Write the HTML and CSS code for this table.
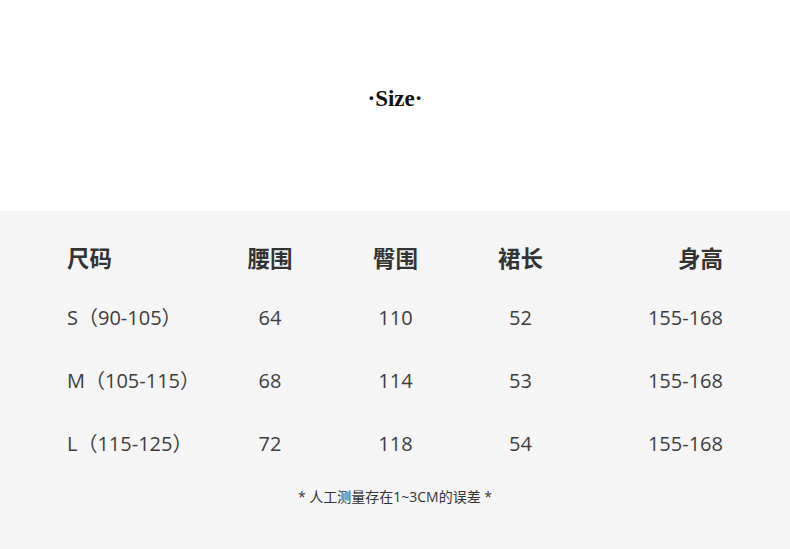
FILE: index.html
```html
<!DOCTYPE html>
<html lang="zh">
<head>
<meta charset="utf-8">
<link rel="stylesheet" href="styles.css">
</head>
<body>
<header class="top">
  <h1 class="title">·Size·</h1>
</header>
<section class="panel">
  <div class="table">
    <div class="cell head left">尺码</div>
    <div class="cell head">腰围</div>
    <div class="cell head">臀围</div>
    <div class="cell head">裙长</div>
    <div class="cell head right">身高</div>

    <div class="cell left">S（90-105）</div>
    <div class="cell">64</div>
    <div class="cell">110</div>
    <div class="cell">52</div>
    <div class="cell right">155-168</div>

    <div class="cell left">M（105-115）</div>
    <div class="cell">68</div>
    <div class="cell">114</div>
    <div class="cell">53</div>
    <div class="cell right">155-168</div>

    <div class="cell left">L（115-125）</div>
    <div class="cell">72</div>
    <div class="cell">118</div>
    <div class="cell">54</div>
    <div class="cell right">155-168</div>
  </div>
  <p class="note">* 人工测量存在1~3CM的误差 *</p>
</section>
</body>
</html>
```
FILE: styles.css
```css
html, body {
  margin: 0;
  padding: 0;
  background: #ffffff;
}
body {
  width: 790px;
  height: 549px;
  overflow: hidden;
  font-family: "Open Sans", "Noto Sans CJK SC", sans-serif;
  color: #333333;
}
.top {
  height: 211px;
  display: flex;
  align-items: center;
  justify-content: center;
}
.title {
  margin: 0;
  margin-top: -14px;
  font-family: "Liberation Serif", serif;
  font-weight: bold;
  font-size: 23px;
  line-height: 1;
  color: #111111;
}
.panel {
  background: #f5f5f5;
  height: 338px;
  padding-top: 25px;
  box-sizing: border-box;
}
.table {
  margin-left: 67px;
  width: 656px;
  display: grid;
  grid-template-columns: 140px 126px 125px 125px 140px;
  grid-template-rows: 50px 63px 63px 63px;
}
.cell {
  display: flex;
  align-items: center;
  justify-content: center;
  font-size: 20px;
  line-height: 1;
  color: #3d3d3d;
  white-space: nowrap;
}
.cell.left { justify-content: flex-start; }
.cell.right { justify-content: flex-end; }
.cell.head {
  font-family: "Noto Sans CJK SC", sans-serif;
  font-size: 22.5px;
  font-weight: bold;
  color: #333333;
  align-items: flex-start;
  padding-top: 10px;
}
.note {
  margin: 12px 0 0;
  text-align: center;
  font-size: 14px;
  line-height: 20px;
  color: #333333;
}
```
